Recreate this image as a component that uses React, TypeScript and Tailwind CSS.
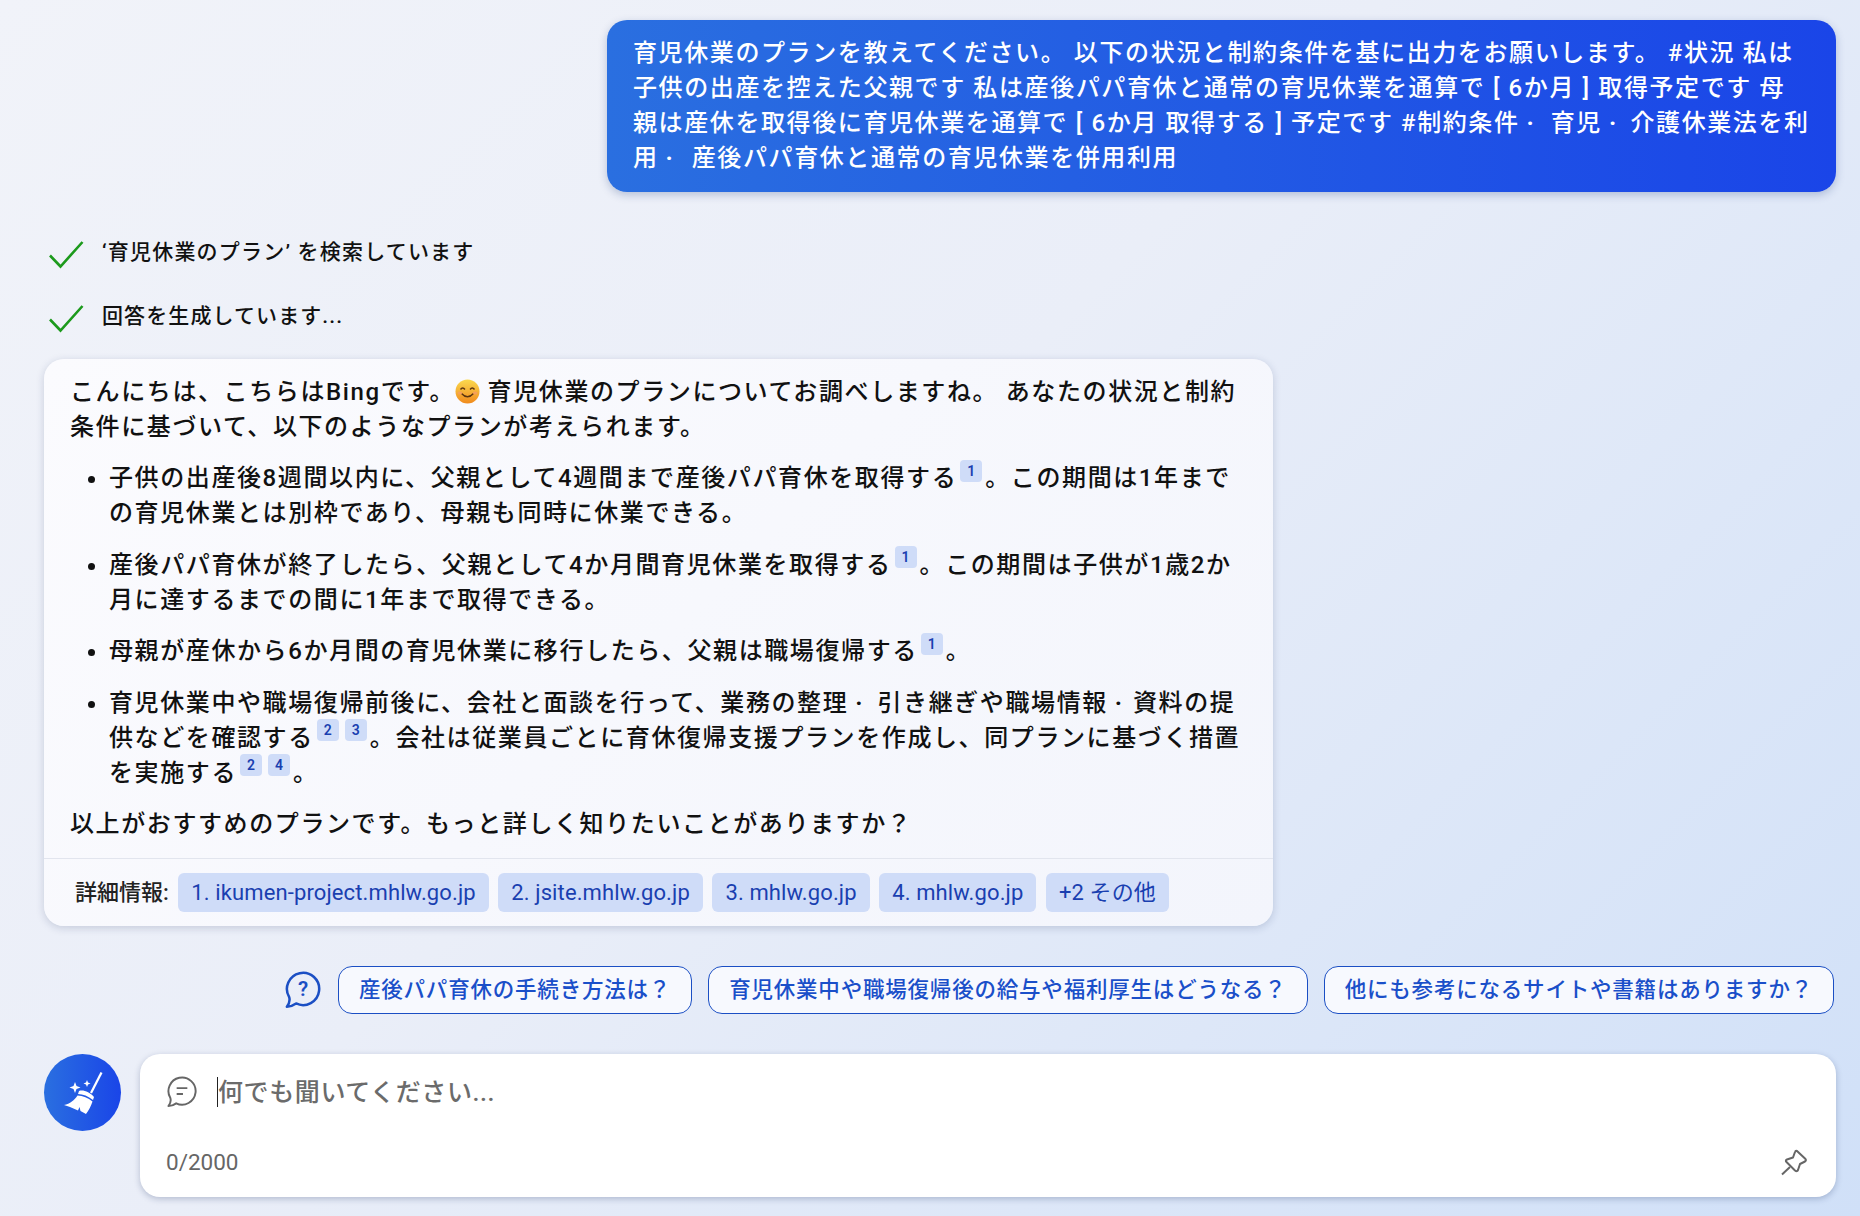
const font = "font-['Roboto','Noto_Sans_CJK_JP',sans-serif]";

function Check() {
  return (
    <svg width="36" height="30" viewBox="0 0 36 30" fill="none" className="shrink-0">
      <path d="M2 15.5 L12.5 26.5 L34.5 2" stroke="#1c9a1c" strokeWidth="2.6" />
    </svg>
  );
}

function Bubble({ stroke, width }: { stroke: string; width: number }) {
  return (
    <path
      d="M2.500 31 C4 29 5.500 26 4.500 22.700 A14 14 0 1 1 10.500 28.200 C8 30 5 31 2.500 31 Z"
      stroke={stroke}
      strokeWidth={width}
      strokeLinejoin="round"
    />
  );
}

function Cite({ n }: { n: number }) {
  return (
    <span className="relative -top-[9px] mx-[3px] inline-flex h-[22px] w-[22px] items-center justify-center rounded-[4px] bg-[#cfdcf8] align-middle text-[14px] leading-none font-semibold tracking-normal text-[#1a3fb0]">
      {n}
    </span>
  );
}

// narrow middle dot, the width varies a little from line to line in the picture
function Dot({ className }: { className: string }) {
  return <span className={`inline-block pl-[7px] font-bold tracking-normal ${className}`}>·</span>;
}

function Smile() {
  return (
    <svg width="25" height="25" viewBox="0 0 25 25" className="inline-block align-[-4px]">
      <defs>
        <linearGradient id="sm" x1="0" y1="0" x2="0" y2="1">
          <stop offset="0" stopColor="#fbd94f" />
          <stop offset="1" stopColor="#f08a1d" />
        </linearGradient>
      </defs>
      <circle cx="12.5" cy="12.5" r="12" fill="url(#sm)" />
      <path d="M5.5 10.5 q2.2 -3 4.4 0 M15.1 10.5 q2.2 -3 4.4 0" stroke="#5a3410" strokeWidth="1.5" fill="none" />
      <path d="M6.5 14.5 q6 6.5 12 0" stroke="#5a3410" strokeWidth="1.5" fill="none" />
      <ellipse cx="5" cy="14" rx="2.4" ry="1.6" fill="#f59a6a" opacity=".7" />
      <ellipse cx="20" cy="14" rx="2.4" ry="1.6" fill="#f59a6a" opacity=".7" />
    </svg>
  );
}

function Source({ label }: { label: string }) {
  return (
    <span className="flex h-[39px] items-center rounded-[6px] bg-[#cfdcf8] px-[13px] text-[22px] leading-none tracking-[0.12px] text-[#1a3fb0]">
      {label}
    </span>
  );
}

function Suggestion({ label }: { label: string }) {
  return (
    <button className="h-[48px] rounded-[14px] border border-[#1b4fc4] bg-[#f7f9fe] px-[20px] text-[21.5px] leading-none font-medium tracking-[0.8px] whitespace-nowrap text-[#1a4fc9]">
      {label}
    </button>
  );
}

export default function App() {
  return (
    <div
      className={`${font} flex h-[1216px] w-[1860px] flex-col overflow-hidden bg-[linear-gradient(135deg,#f1f3f9_0%,#eaeef8_45%,#d0e0f8_100%)] px-[24px] pt-[20px] text-[#111]`}
    >
      <div className="flex justify-end">
        <div className="w-[1229px] rounded-[20px] bg-[linear-gradient(90deg,#2a6fe0,#1a45e8)] px-[26px] pt-[16px] pb-[16px] text-[24px] leading-[35px] font-medium tracking-[1.6px] whitespace-nowrap text-white shadow-[0_3px_8px_rgba(20,50,120,0.25)]">
          育児休業のプランを教えてください。 以下の状況と制約条件を基に出力をお願いします。 #状況 私は
          <br />
          子供の出産を控えた父親です 私は産後パパ育休と通常の育児休業を通算で [ 6か月 ] 取得予定です 母
          <br />
          親は産休を取得後に育児休業を通算で [ 6か月 取得する ] 予定です #制約条件
          <Dot className="w-[23.6px]" /> 育児
          <Dot className="w-[21px]" /> 介護休業法を利
          <br />用
          <Dot className="w-[25.6px]" /> 産後パパ育休と通常の育児休業を併用利用
        </div>
      </div>

      <div className="mt-[48px] ml-[24px] flex h-[30px] items-center gap-[18px] text-[21px] font-medium tracking-[1.2px] text-[#111]">
        <Check />
        <span className="-mt-[4px]">‘育児休業のプラン’ を検索しています</span>
      </div>
      <div className="mt-[34px] ml-[24px] flex h-[30px] items-center gap-[18px] text-[21px] font-medium tracking-[1.1px] text-[#111]">
        <Check />
        <span className="-mt-[4px]">回答を生成しています...</span>
      </div>

      <div className="mt-[25px] ml-[20px] w-[1229px] rounded-[20px] bg-[linear-gradient(135deg,#fbfbfe,#f3f5fc)] shadow-[0_2px_8px_rgba(20,40,90,0.18)]">
        <div className="h-[499px] px-[26px] pt-[16px] text-[24px] leading-[35px] font-medium tracking-[1.6px] whitespace-nowrap text-[#111]">
          <p>
            こんにちは、こちらはBingです。
            <Smile /> 育児休業のプランについてお調べしますね。 あなたの状況と制約
            <br />
            条件に基づいて、以下のようなプランが考えられます。
          </p>
          <ul className="mt-[16.4px] list-disc pl-[39px]">
            <li>
              子供の出産後8週間以内に、父親として4週間まで産後パパ育休を取得する
              <Cite n={1} />
              。この期間は1年まで
              <br />
              の育児休業とは別枠であり、母親も同時に休業できる。
            </li>
            <li className="mt-[16.4px]">
              産後パパ育休が終了したら、父親として4か月間育児休業を取得する
              <Cite n={1} />
              。この期間は子供が1歳2か
              <br />
              月に達するまでの間に1年まで取得できる。
            </li>
            <li className="mt-[16.4px]">
              母親が産休から6か月間の育児休業に移行したら、父親は職場復帰する
              <Cite n={1} />。
            </li>
            <li className="mt-[16.4px]">
              育児休業中や職場復帰前後に、会社と面談を行って、業務の整理
              <Dot className="w-[21.6px]" /> 引き継ぎや職場情報
              <Dot className="w-[17.6px]" /> 資料の提
              <br />
              供などを確認する
              <Cite n={2} />
              <Cite n={3} />
              。会社は従業員ごとに育休復帰支援プランを作成し、同プランに基づく措置
              <br />
              を実施する
              <Cite n={2} />
              <Cite n={4} />。
            </li>
          </ul>
          <p className="mt-[16.4px]">以上がおすすめのプランです。もっと詳しく知りたいことがありますか？</p>
        </div>
        <div className="flex h-[68px] items-center gap-[9.5px] border-t border-[#e2e5ee] pl-[31px] text-[22px]">
          <span className="font-medium tracking-[0px] text-[#222]">詳細情報:</span>
          <Source label="1. ikumen-project.mhlw.go.jp" />
          <Source label="2. jsite.mhlw.go.jp" />
          <Source label="3. mhlw.go.jp" />
          <Source label="4. mhlw.go.jp" />
          <Source label="+2 その他" />
        </div>
      </div>

      <div className="mt-[40px] flex items-center justify-end gap-[16px] pr-[2px]">
        <svg width="38" height="38" viewBox="0 0 33 33" fill="none">
          <Bubble stroke="#1b4fc4" width={2.2} />
          <text x="16.500" y="21.500" textAnchor="middle" fontSize="18" fontWeight="600" fill="#1b4fc4" fontFamily="Roboto, sans-serif">
            ?
          </text>
        </svg>
        <Suggestion label="産後パパ育休の手続き方法は？" />
        <Suggestion label="育児休業中や職場復帰後の給与や福利厚生はどうなる？" />
        <Suggestion label="他にも参考になるサイトや書籍はありますか？" />
      </div>

      <div className="mt-[40px] ml-[20px] flex items-start gap-[19px]">
        <div className="flex h-[77px] w-[77px] shrink-0 items-center justify-center rounded-full bg-[linear-gradient(90deg,#2a6fe0,#1a45e8)]">
          <svg width="40" height="44" viewBox="0 0 40 44" fill="white">
            <path d="M37.500 1 L39.500 2 L29 22.500 L27 21.500 Z" />
            <path d="M16 20 C20 18.500 27 21 31 26 L30 29 C25 25 20 23 15 23 Z" />
            <path d="M14.500 24.500 C20 24.500 25 27 29.500 30.500 C28 35 26 39 23 43 L17.500 40 L16.500 36 L15 39.500 L7 36 L1 34 C7 33 11.500 29 14.500 24.500 Z" />
            <path d="M12 11 L13.500 15 L17.500 16.500 L13.500 18 L12 22 L10.500 18 L6.500 16.500 L10.500 15 Z" />
            <path d="M24 9 L25 11.500 L27.500 12.500 L25 13.500 L24 16 L23 13.500 L20.500 12.500 L23 11.500 Z" />
          </svg>
        </div>
        <div className="flex h-[143px] flex-1 flex-col rounded-[20px] bg-white pt-[18px] pr-[28px] pb-[17px] pl-[26px] shadow-[0_2px_6px_rgba(20,40,90,0.25)]">
          <div className="flex h-[40px] items-center">
            <svg width="32" height="32" viewBox="0 0 33 33" fill="none" className="shrink-0">
              <Bubble stroke="#666" width={2} />
              <path d="M11 12.500 H22 M11 18.500 H17.500" stroke="#666" strokeWidth="2" />
            </svg>
            <span className="ml-[19px] h-[30px] w-px bg-[#222]" />
            <span className="text-[25px] leading-none font-medium tracking-[0.6px] text-[#6b6b6b]">何でも聞いてください...</span>
          </div>
          <div className="mt-auto flex items-center justify-between">
            <span className="text-[22.5px] text-[#666]">0/2000</span>
            <svg width="28" height="28" viewBox="0 0 28 28" fill="none" stroke="#666" strokeWidth="2" strokeLinejoin="round" className="-mt-[3px]">
              <path d="M17 3 L25.500 11 Q26.500 12.500 25 13.500 L20 16 L18 22 Q17 24 15 22.500 L6.500 14 Q5 12.500 7 11.500 L13 9.500 L15 4 Q15.500 2.500 17 3 Z" />
              <path d="M10 19 L2 26.500" />
            </svg>
          </div>
        </div>
      </div>
    </div>
  );
}
